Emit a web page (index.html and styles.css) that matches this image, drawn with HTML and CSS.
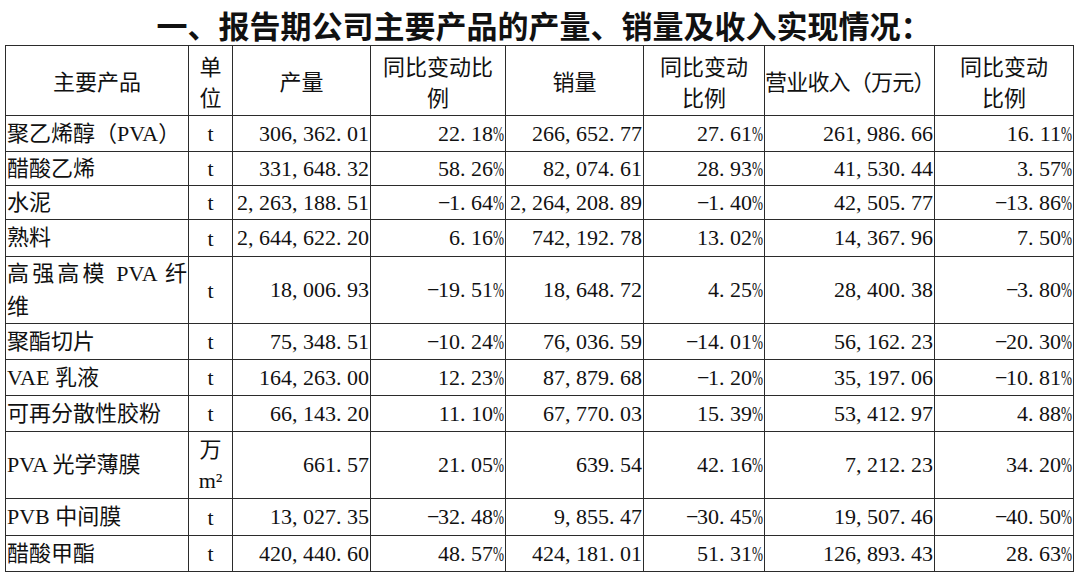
FILE: index.html
```html
<!DOCTYPE html>
<html lang="zh-CN">
<head>
<meta charset="utf-8">
<title>报告期公司主要产品的产量、销量及收入实现情况</title>
<link rel="stylesheet" href="styles.css">
</head>
<body>
<h1 class="title">一、报告期公司主要产品的产量、销量及收入实现情况：</h1>
<table class="report">
<colgroup>
<col class="c-name"><col class="c-unit"><col class="c-a"><col class="c-b"><col class="c-c"><col class="c-d"><col class="c-e"><col class="c-f">
</colgroup>
<thead>
<tr class="head">
<th>主要产品</th>
<th>单<br>位</th>
<th>产量</th>
<th>同比变动比<br>例</th>
<th>销量</th>
<th>同比变动<br>比例</th>
<th class="tight">营业收入（万元）</th>
<th>同比变动<br>比例</th>
</tr>
</thead>
<tbody>
<tr class="row">
<td class="name">聚乙烯醇（PVA）</td><td class="unit">t</td>
<td class="num">306<i>,</i>362<i>.</i>01</td><td class="num">22<i>.</i>18<b>%</b></td>
<td class="num">266<i>,</i>652<i>.</i>77</td><td class="num">27<i>.</i>61<b>%</b></td>
<td class="num">261<i>,</i>986<i>.</i>66</td><td class="num">16<i>.</i>11<b>%</b></td>
</tr>
<tr class="row short">
<td class="name">醋酸乙烯</td><td class="unit">t</td>
<td class="num">331<i>,</i>648<i>.</i>32</td><td class="num">58<i>.</i>26<b>%</b></td>
<td class="num">82<i>,</i>074<i>.</i>61</td><td class="num">28<i>.</i>93<b>%</b></td>
<td class="num">41<i>,</i>530<i>.</i>44</td><td class="num">3<i>.</i>57<b>%</b></td>
</tr>
<tr class="row short">
<td class="name">水泥</td><td class="unit">t</td>
<td class="num">2<i>,</i>263<i>,</i>188<i>.</i>51</td><td class="num"><i>−</i>1<i>.</i>64<b>%</b></td>
<td class="num">2<i>,</i>264<i>,</i>208<i>.</i>89</td><td class="num"><i>−</i>1<i>.</i>40<b>%</b></td>
<td class="num">42<i>,</i>505<i>.</i>77</td><td class="num"><i>−</i>13<i>.</i>86<b>%</b></td>
</tr>
<tr class="row loose">
<td class="name">熟料</td><td class="unit">t</td>
<td class="num">2<i>,</i>644<i>,</i>622<i>.</i>20</td><td class="num">6<i>.</i>16<b>%</b></td>
<td class="num">742<i>,</i>192<i>.</i>78</td><td class="num">13<i>.</i>02<b>%</b></td>
<td class="num">14<i>,</i>367<i>.</i>96</td><td class="num">7<i>.</i>50<b>%</b></td>
</tr>
<tr class="row tall">
<td class="name wrap">高强高模 PVA 纤维</td><td class="unit">t</td>
<td class="num">18<i>,</i>006<i>.</i>93</td><td class="num"><i>−</i>19<i>.</i>51<b>%</b></td>
<td class="num">18<i>,</i>648<i>.</i>72</td><td class="num">4<i>.</i>25<b>%</b></td>
<td class="num">28<i>,</i>400<i>.</i>38</td><td class="num"><i>−</i>3<i>.</i>80<b>%</b></td>
</tr>
<tr class="row">
<td class="name">聚酯切片</td><td class="unit">t</td>
<td class="num">75<i>,</i>348<i>.</i>51</td><td class="num"><i>−</i>10<i>.</i>24<b>%</b></td>
<td class="num">76<i>,</i>036<i>.</i>59</td><td class="num"><i>−</i>14<i>.</i>01<b>%</b></td>
<td class="num">56<i>,</i>162<i>.</i>23</td><td class="num"><i>−</i>20<i>.</i>30<b>%</b></td>
</tr>
<tr class="row">
<td class="name">VAE 乳液</td><td class="unit">t</td>
<td class="num">164<i>,</i>263<i>.</i>00</td><td class="num">12<i>.</i>23<b>%</b></td>
<td class="num">87<i>,</i>879<i>.</i>68</td><td class="num"><i>−</i>1<i>.</i>20<b>%</b></td>
<td class="num">35<i>,</i>197<i>.</i>06</td><td class="num"><i>−</i>10<i>.</i>81<b>%</b></td>
</tr>
<tr class="row">
<td class="name">可再分散性胶粉</td><td class="unit">t</td>
<td class="num">66<i>,</i>143<i>.</i>20</td><td class="num">11<i>.</i>10<b>%</b></td>
<td class="num">67<i>,</i>770<i>.</i>03</td><td class="num">15<i>.</i>39<b>%</b></td>
<td class="num">53<i>,</i>412<i>.</i>97</td><td class="num">4<i>.</i>88<b>%</b></td>
</tr>
<tr class="row tall">
<td class="name">PVA 光学薄膜</td><td class="unit">万<br>m²</td>
<td class="num">661<i>.</i>57</td><td class="num">21<i>.</i>05<b>%</b></td>
<td class="num">639<i>.</i>54</td><td class="num">42<i>.</i>16<b>%</b></td>
<td class="num">7<i>,</i>212<i>.</i>23</td><td class="num">34<i>.</i>20<b>%</b></td>
</tr>
<tr class="row loose">
<td class="name">PVB 中间膜</td><td class="unit">t</td>
<td class="num">13<i>,</i>027<i>.</i>35</td><td class="num"><i>−</i>32<i>.</i>48<b>%</b></td>
<td class="num">9<i>,</i>855<i>.</i>47</td><td class="num"><i>−</i>30<i>.</i>45<b>%</b></td>
<td class="num">19<i>,</i>507<i>.</i>46</td><td class="num"><i>−</i>40<i>.</i>50<b>%</b></td>
</tr>
<tr class="row">
<td class="name">醋酸甲酯</td><td class="unit">t</td>
<td class="num">420<i>,</i>440<i>.</i>60</td><td class="num">48<i>.</i>57<b>%</b></td>
<td class="num">424<i>,</i>181<i>.</i>01</td><td class="num">51<i>.</i>31<b>%</b></td>
<td class="num">126<i>,</i>893<i>.</i>43</td><td class="num">28<i>.</i>63<b>%</b></td>
</tr>
</tbody>
</table>
</body>
</html>
```

FILE: styles.css
```css
html, body {
  margin: 0;
  padding: 0;
  background: #ffffff;
}

body {
  padding: 0 5px;
  font-family: "Liberation Serif", "Noto Sans CJK SC", serif;
  color: #111111;
}

.title {
  margin: 0;
  height: 45px;
  box-sizing: border-box;
  padding: 5px 0 0 8px;
  font-family: "Noto Sans CJK SC", sans-serif;
  font-weight: 700;
  font-size: 31px;
  line-height: 40px;
  text-align: center;
  color: #111111;
  white-space: nowrap;
}

.report {
  border-collapse: collapse;
  table-layout: fixed;
  width: 1068px;
  font-size: 22px;
}

.c-name { width: 183px; }
.c-unit { width: 44px; }
.c-a { width: 138px; }
.c-b { width: 135px; }
.c-c { width: 138px; }
.c-d { width: 121px; }
.c-e { width: 170px; }
.c-f { width: 139px; }

.report th,
.report td {
  border: 1.5px solid #2b2b2b;
  padding: 0 1px;
  vertical-align: middle;
  white-space: nowrap;
  overflow: visible;
}

.report th {
  font-family: "Noto Sans CJK SC", sans-serif;
  font-weight: 400;
  text-align: center;
  line-height: 31px;
}

.head {
  height: 70px;
}

.report .tight {
  padding: 0;
  letter-spacing: -0.8px;
}

.row {
  height: 36px;
}

.row.short {
  height: 34px;
}

.row.loose {
  height: 37px;
}

.row.tall {
  height: 67px;
}

.report td {
  line-height: 30px;
}

.name {
  text-align: left;
}

.report .wrap {
  white-space: normal;
  text-align: justify;
  line-height: 33px;
}

.report .unit {
  text-align: center;
  line-height: 31px;
}

.num {
  text-align: right;
}

.num i {
  font-style: normal;
  display: inline-block;
  width: 0.5em;
  text-align: left;
}

.num b {
  font-weight: 400;
  display: inline-block;
  width: 0.5em;
  transform: scaleX(0.6);
  transform-origin: left center;
}
```
